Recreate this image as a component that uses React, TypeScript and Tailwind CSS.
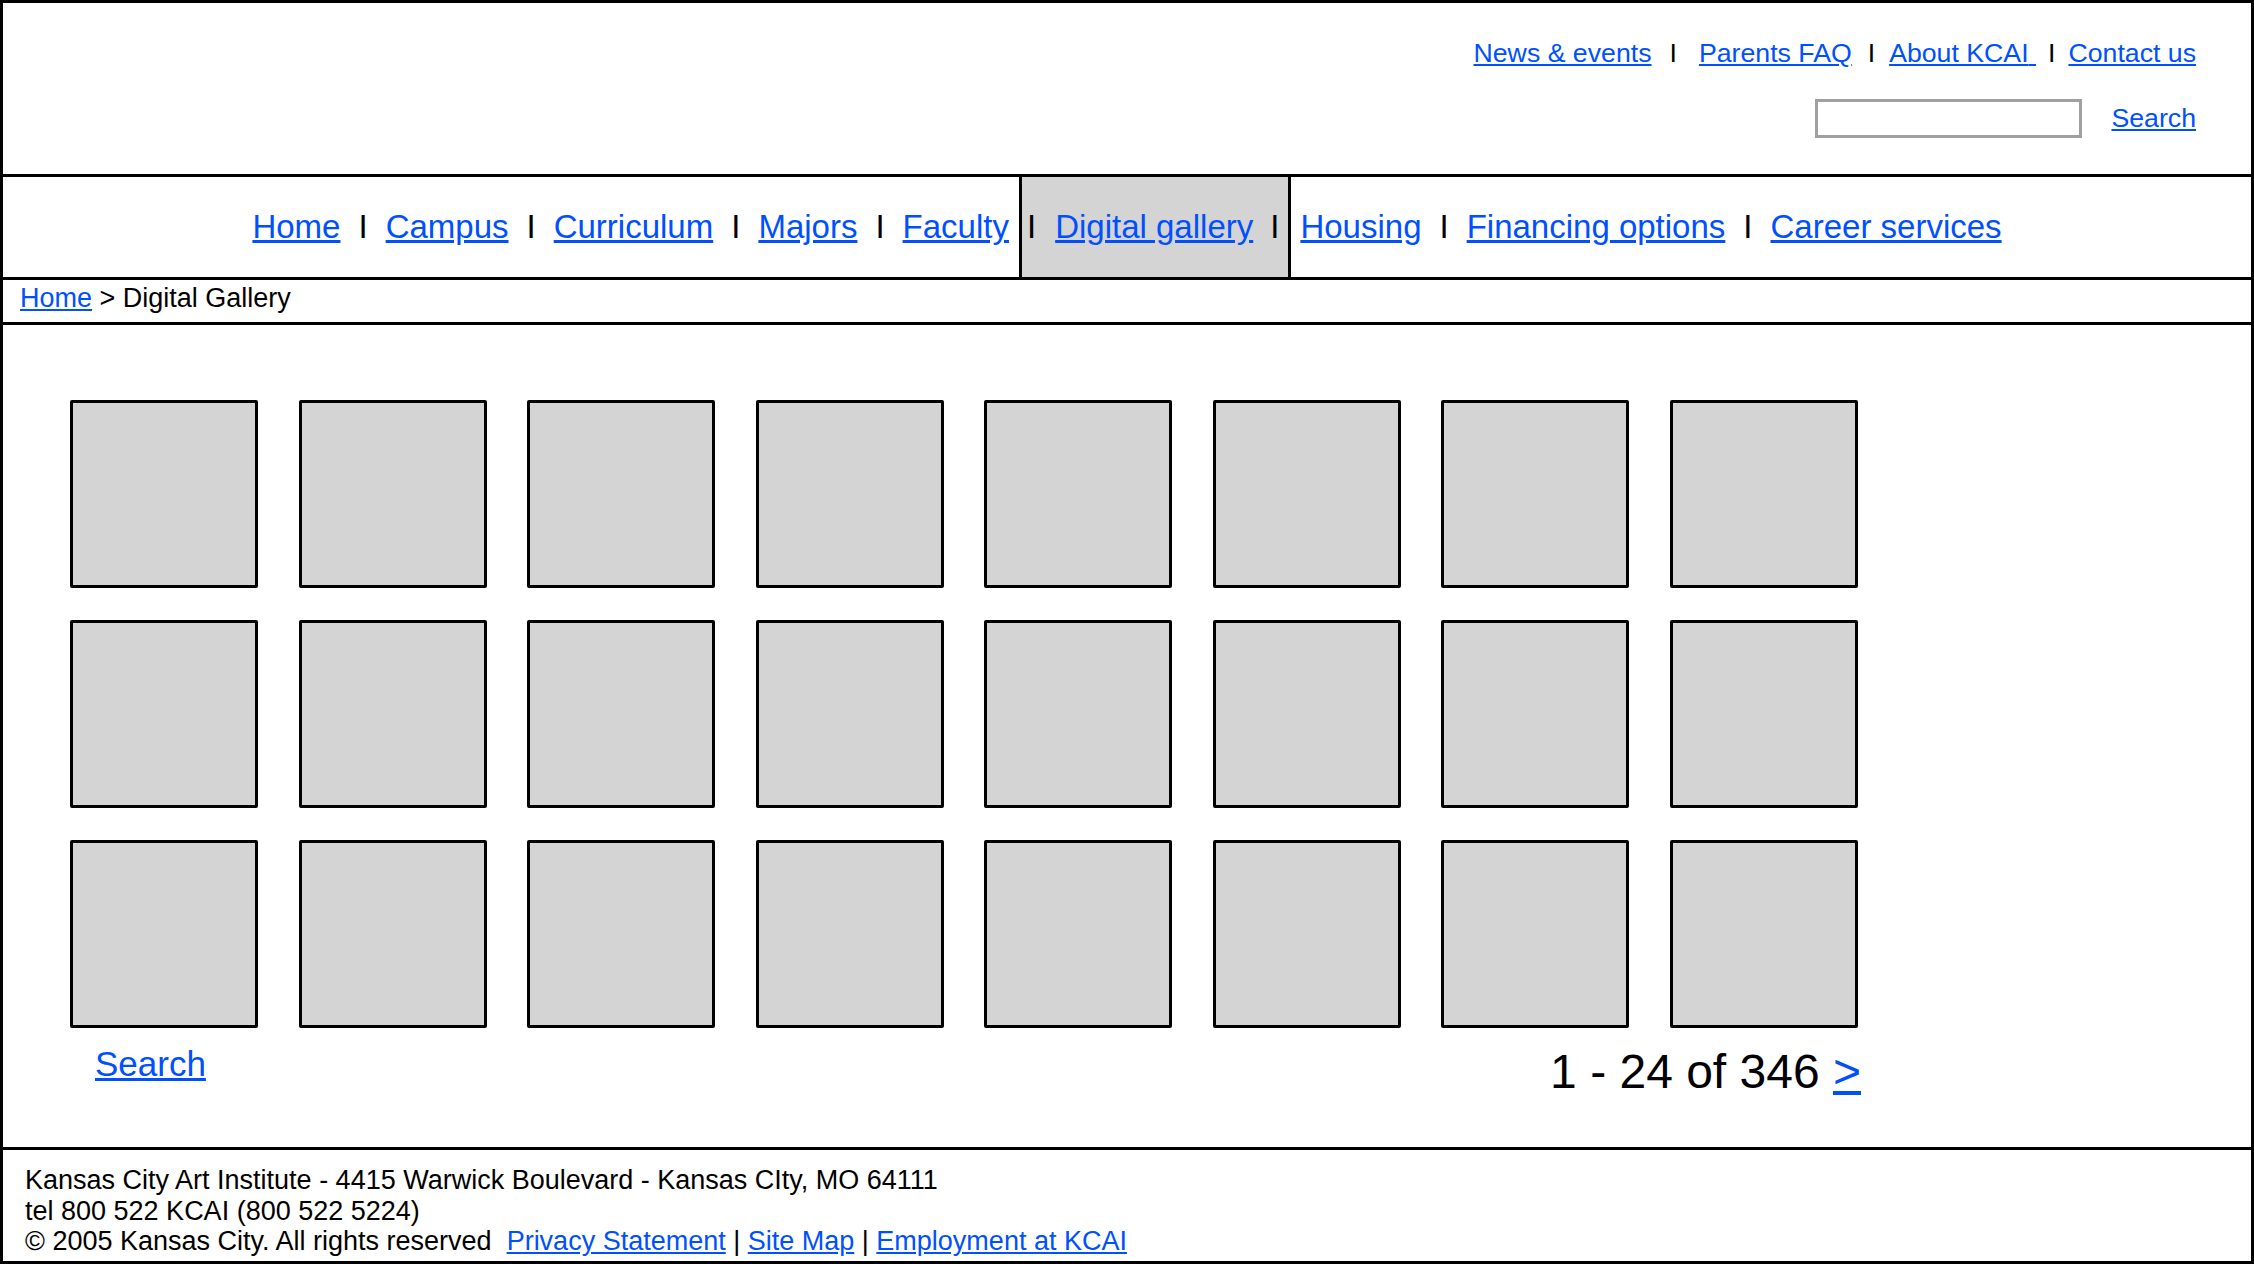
import React from 'react';

const link = 'text-[#0050ff] underline';

function Sep({ className = '' }: { className?: string }) {
  return <span className={className}>I</span>;
}

export default function App() {
  const thumbs = Array.from({ length: 24 }, (_, i) => i);

  return (
    <div className="w-[2254px] h-[1264px] border-[3px] border-black flex flex-col bg-white text-black [font-family:'Liberation_Sans',Arial,sans-serif]">
      {/* Header: utility links + search */}
      <div className="h-[174px] shrink-0 border-b-[3px] border-black flex flex-col items-end pr-[55px] pt-[35px] text-[26.7px] leading-[31px]">
        <div className="flex items-center">
          <a href="#" className={link}>News &amp; events</a>
          <Sep className="ml-[18px] mr-[22px]" />
          <a href="#" className={link}>Parents FAQ</a>
          <Sep className="ml-[16px] mr-[14px]" />
          <a href="#" className={link}>About KCAI{'\u00a0'}</a>
          <Sep className="ml-[12px] mr-[13px]" />
          <a href="#" className={link}>Contact us</a>
        </div>
        <div className="flex items-center mt-[30px]">
          <input type="text" className="w-[267px] h-[39px] border-[3px] border-[#a0a0a0] bg-white outline-none" />
          <a href="#" className={`${link} ml-[29px]`}>Search</a>
        </div>
      </div>

      {/* Main navigation */}
      <div className="h-[103px] shrink-0 border-b-[3px] border-black flex items-center justify-center text-[33px] leading-[38px]">
        <a href="#" className={link}>Home</a>
        <Sep className="mx-[18px]" />
        <a href="#" className={link}>Campus</a>
        <Sep className="mx-[18px]" />
        <a href="#" className={link}>Curriculum</a>
        <Sep className="mx-[18px]" />
        <a href="#" className={link}>Majors</a>
        <Sep className="mx-[18px]" />
        <a href="#" className={link}>Faculty</a>
        <div className="self-stretch -my-[3px] ml-[10px] pl-[5px] pr-[9px] flex items-center border-[3px] border-black bg-[#d4d4d4]">
          <Sep />
          <a href="#" className={`${link} ml-[19px]`}>Digital gallery</a>
          <Sep className="ml-[17px]" />
        </div>
        <a href="#" className={`${link} ml-[9px]`}>Housing</a>
        <Sep className="mx-[18px]" />
        <a href="#" className={link}>Financing options</a>
        <Sep className="mx-[18px]" />
        <a href="#" className={link}>Career services</a>
      </div>

      {/* Breadcrumb */}
      <div className="h-[45px] shrink-0 border-b-[3px] border-black pl-[17px] pt-[3px] text-[27px] leading-[31px]">
        <a href="#" className={link}>Home</a> &gt; Digital Gallery
      </div>

      {/* Gallery */}
      <div className="flex-1 border-b-[3px] border-black pl-[67px] pt-[75px]">
        <div className="grid grid-cols-[repeat(8,188px)] gap-x-[40.5px] gap-y-[32px]">
          {thumbs.map((i) => (
            <div key={i} className="h-[188px] bg-[#d4d4d4] border-[3px] border-black rounded-[2px]" />
          ))}
        </div>
        <div className="w-[1791px] mt-[16px] flex justify-between items-start">
          <a href="#" className={`${link} ml-[25px] text-[35px] leading-[40px]`}>Search</a>
          <div className="text-[48px] leading-[55px]">
            1 - 24 of 346 <a href="#" className={link}>&gt;</a>
          </div>
        </div>
      </div>

      {/* Footer */}
      <div className="h-[111px] shrink-0 pl-[22px] pt-[15px] text-[27px] leading-[30.5px]">
        <div>Kansas City Art Institute - 4415 Warwick Boulevard - Kansas CIty, MO 64111</div>
        <div>tel 800 522 KCAI (800 522 5224)</div>
        <div>
          © 2005 Kansas City. All rights reserved{'\u00a0 '}
          <a href="#" className={link}>Privacy Statement</a> | <a href="#" className={link}>Site Map</a> |{' '}
          <a href="#" className={link}>Employment at KCAI</a>
        </div>
      </div>
    </div>
  );
}
